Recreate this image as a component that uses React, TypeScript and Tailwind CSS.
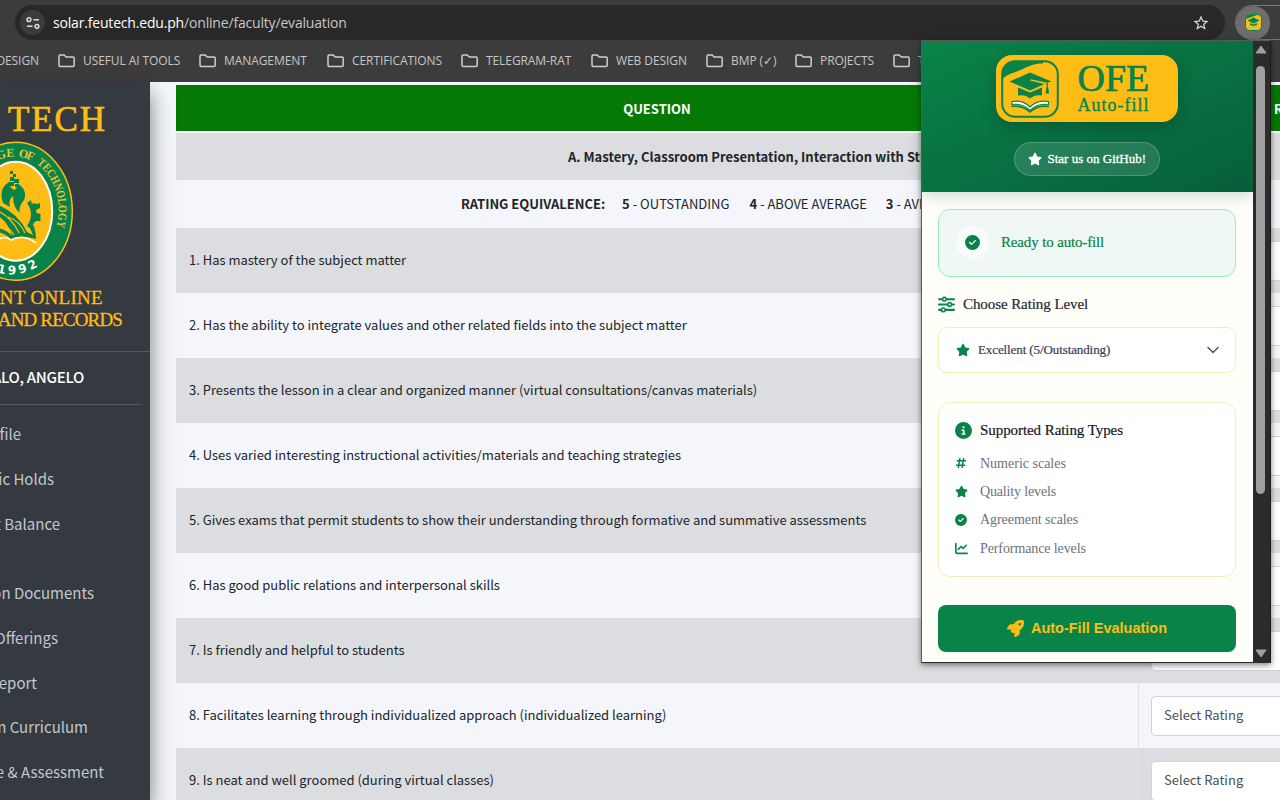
import { type ReactNode } from "react";
import { FaStar, FaCircleCheck, FaSliders, FaCircleInfo, FaHashtag, FaChartLine, FaRocket } from "react-icons/fa6";
import { MdStarBorder } from "react-icons/md";

const CJK = "font-['Noto_Sans_CJK_SC',sans-serif]";
const UI = "font-['Open_Sans',sans-serif]";
const SERIF = "font-['Liberation_Serif',serif]";

function T({ className = "", children }: { className?: string; children: ReactNode }) {
  return <span className={"inline-block shrink-0 whitespace-nowrap " + className}>{children}</span>;
}

function Folder() {
  return (
    <svg className="h-[14px] w-[18px] shrink-0" viewBox="0 0 18 14" fill="none" stroke="#cfcfcf" strokeWidth="1.5" strokeLinejoin="round">
      <path d="M1 2.2Q1 1 2.2 1H6.2L8.2 3H15Q16.2 3 16.2 4.2V11.3Q16.2 12.5 15 12.5H2.2Q1 12.5 1 11.3Z" />
    </svg>
  );
}

const bookmarks = [
  { name: "USEFUL AI TOOLS", width: "w-[141px]" },
  { name: "MANAGEMENT", width: "w-[128px]" },
  { name: "CERTIFICATIONS", width: "w-[134px]" },
  { name: "TELEGRAM-RAT", width: "w-[130px]" },
  { name: "WEB DESIGN", width: "w-[115px]" },
  { name: "BMP (✓)", width: "w-[89px]" },
  { name: "PROJECTS", width: "w-[98px]" },
];

function Cap() {
  return (
    <svg className="h-[58px] w-[58px] shrink-0" viewBox="0 0 58 58">
      <rect x="1.2" y="1.2" width="55.600" height="55.600" rx="13" fill="#fdbd14" stroke="#0a8349" strokeWidth="2" />
      <path d="M1.2 19V14Q1.2 1.2 14 1.2H42V3.500H38Q32 4 26 7Q18 11 9 14Q4 16 1.2 19Z" fill="#0a8349" />
      <path d="M29 12.5 8.5 21.5 29 30.5 43.500 24 29 20.500 29.500 19.300 46 22.800 50.500 21.500Z" fill="#0a8349" />
      <path d="M17 27.500 29 32.600 41 27.500V35.500Q34 34 29 38.500Q24 34 17 35.500Z" fill="#0a8349" />
      <path d="M46.200 23V31" stroke="#0a8349" strokeWidth="1.3" />
      <path d="M45.500 28h1.800l.9 5.500h-3.600z" fill="#0a8349" />
      <path d="M11 41.5Q22 39.5 29 47Q36 39.5 47.500 41.5V44.500Q36 43 29 50.500Q22 43 11 44.500Z" fill="#fff" stroke="#0a8349" strokeWidth="1.1" />
      <path d="M10.500 46.500Q21 44.500 29 52Q37 44.500 48 46.500" fill="none" stroke="#0a8349" strokeWidth="1.6" />
    </svg>
  );
}

function Seal() {
  return (
    <svg className="block h-[142px] w-[75px]" viewBox="0 140 75 142">
      <ellipse cx="15.700" cy="211.200" rx="56.600" ry="69" fill="#0a8349" stroke="#fdbd14" strokeWidth="1.500" />
      <ellipse cx="15.700" cy="211.200" rx="36.500" ry="49.500" fill="#fdbd14" stroke="#fff" strokeWidth="2" />
      <path d="M32 205 33 203 37 204 40 203V208L36 210 36.500 213 40.500 214V221H36L33 224 34 231 27 226Q35 214 27 203L31 200Z" fill="#0a8349" />
      <path d="M10 171h3v3h-3zM13 174h3v3h-3zM10 177h4v4h-4zM14 179h5v4h-5zM9 182h5v4H9zM15 184h3v3h-3z" fill="#0a8349" />
      <path d="M3 203Q-2 189 9 182Q9 187 14 190Q18 188 17 183Q28 190 24 200Q18 207 20 213Q13 208 13 196Q8 200 10 207Z" fill="#0a8349" />
      <path d="M-2 205Q18 213 27 232L33 235 30 228 34 226Q36 233 36 239Q20 234 11 239Q5 233 -2 232V228Q7 230 12 236Q8 222 -2 216Z" fill="#0a8349" />
      <path d="M-2 211Q12 218 19 233M8 217Q20 221 25 233M-1 222Q8 226 14 235" fill="none" stroke="#fdbd14" strokeWidth="1.200" />
      <path d="M-2 239Q6 236 11 240Q23 234 36 243" fill="none" stroke="#fff" strokeWidth="1.500" />
      <path id="sealTop" d="M-18 171Q0 155 15.700 157A43 54 0 0 1 58.700 211Q58.700 222 54 234" fill="none" />
      <path id="sealBottom" d="M-10 270Q16 281 42 264" fill="none" />
      <g fill="#e9c33a" fontFamily="Liberation Serif" fontWeight="700" fontSize="12">
        <text><textPath href="#sealTop" startOffset="19">GE</textPath></text>
        <text><textPath href="#sealTop" startOffset="40" textLength="15">OF</textPath></text>
        <text><textPath href="#sealTop" startOffset="60" textLength="70" lengthAdjust="spacingAndGlyphs">TECHNOLOGY</textPath></text>
      </g>
      <text fill="#fff" fontFamily="DejaVu Sans" fontWeight="700" fontSize="12"><textPath href="#sealBottom" startOffset="7" textLength="43">1992</textPath></text>
    </svg>
  );
}

const menu = [
  { t: "file", b: "w-[21px]", h: "h-[45px]" },
  { t: "ic Holds", b: "w-[54px]", h: "h-[45px]" },
  { t: "t Balance", b: "w-[60px]", h: "h-[69px]" },
  { t: "on Documents", b: "w-[94px]", h: "h-[45px]" },
  { t: "Offerings", b: "w-[58px]", h: "h-[45px]" },
  { t: "Report", b: "w-[37px]", h: "h-[44px]" },
  { t: "m Curriculum", b: "w-[88px]", h: "h-[45px]" },
  { t: "e & Assessment", b: "w-[104px]", h: "h-[45px]" },
];

const questions = [
  "1. Has mastery of the subject matter",
  "2. Has the ability to integrate values and other related fields into the subject matter",
  "3. Presents the lesson in a clear and organized manner (virtual consultations/canvas materials)",
  "4. Uses varied interesting instructional activities/materials and teaching strategies",
  "5. Gives exams that permit students to show their understanding through formative and summative assessments",
  "6. Has good public relations and interpersonal skills",
  "7. Is friendly and helpful to students",
  "8. Facilitates learning through individualized approach (individualized learning)",
  "9. Is neat and well groomed (during virtual classes)",
];

const types = [
  { t: "Numeric scales", icon: <FaHashtag className="size-[12px]" />, s: "" },
  { t: "Quality levels", icon: <FaStar className="size-[13px]" />, s: "tracking-[-0.15px]" },
  { t: "Agreement scales", icon: <FaCircleCheck className="size-[12px]" />, s: "tracking-[-0.06px]" },
  { t: "Performance levels", icon: <FaChartLine className="size-[13px]" />, s: "tracking-[-0.1px]" },
];

function Popup() {
  return (
    <div className="absolute left-[921px] top-[40px] flex h-[623px] w-[350px] border border-[#5b5b5b] border-r-[#1c1c1c] border-b-[#2c2c2c] bg-[#fffef9] shadow-[0_2px_6px_rgba(0,0,0,0.5)]">
      <div className={"flex w-[331px] shrink-0 flex-col " + SERIF}>
        <div className="flex h-[151px] shrink-0 flex-col items-center bg-linear-to-br from-[#0a8349] to-[#065f3a] pt-[14px] pr-[2px] shadow-[0_4px_14px_rgba(6,95,58,0.2)]">
          <div className="flex h-[67px] w-[182px] items-center rounded-[16px] bg-[#fdbd14] pl-[5px] shadow-[0_6px_16px_rgba(0,0,0,0.18)]">
            <Cap />
            <div className="ml-[19px] flex flex-col text-[#0a8349]">
              <T className="text-[38px] leading-[32px] [-webkit-text-stroke:0.7px]">OFE</T>
              <T className="text-[18px] leading-[22px] tracking-[1px] [-webkit-text-stroke:0.3px]">Auto-fill</T>
            </div>
          </div>
          <div className="mt-[20px] flex h-[34px] w-[146px] items-center gap-[6px] rounded-full border border-white/20 bg-white/12 pl-[13px] text-[13px] text-white">
            <FaStar className="size-[14px]" />
            <T className="[-webkit-text-stroke:0.3px]">Star us on GitHub!</T>
          </div>
        </div>
        <div className="flex flex-col pt-[17px] pr-[17px] pl-[16px]">
          <div className="flex h-[68px] items-center rounded-[12px] border border-[#93edc9] bg-[#f0f8f5] pb-[2px] pl-[17px]">
            <span className="flex size-[33px] items-center justify-center rounded-full bg-[#f9fcfb]"><FaCircleCheck className="size-[15px] text-[#0a8349]" /></span>
            <T className="ml-[12px] text-[15px] tracking-[-0.15px] text-[#0a8349] [-webkit-text-stroke:0.2px]">Ready to auto-fill</T>
          </div>
          <div className="mt-[15px] flex h-[24px] items-center gap-[8px] text-[15px] text-[#1f2937]">
            <FaSliders className="size-[17px] text-[#0a8349]" />
            <T className="tracking-[-0.08px] [-webkit-text-stroke:0.2px]">Choose Rating Level</T>
          </div>
          <div className="mt-[11px] flex h-[46px] items-center rounded-[9px] border border-[#f6edbc] bg-white pl-[17px] text-[13px] text-[#374151]">
            <FaStar className="size-[14px] text-[#0a8349]" />
            <T className="ml-[8px] tracking-[-0.1px] [-webkit-text-stroke:0.2px]">Excellent (5/Outstanding)</T>
            <svg className="mr-[16px] ml-auto h-[8px] w-[12px]" viewBox="0 0 12 8" fill="none" stroke="#4b5563" strokeWidth="1.500" strokeLinecap="round" strokeLinejoin="round"><path d="M1 1.500 6 6.500 11 1.500" /></svg>
          </div>
          <div className="mt-[29px] flex h-[175px] flex-col rounded-[12px] border border-[#f6edbc] bg-white pt-[15px] pl-[16px]">
            <div className="flex h-[24px] items-center gap-[8px] text-[15px] text-[#111827]">
              <FaCircleInfo className="size-[17px] text-[#0a8349]" />
              <T className="tracking-[-0.07px] [-webkit-text-stroke:0.2px]">Supported Rating Types</T>
            </div>
            <div className="mt-[7px] flex flex-col">
              {types.map((x) => (
                <div key={x.t} className="flex h-[28.400px] items-center text-[14px] text-[#6b7280]">
                  <span className="flex w-[25px] text-[#0a8349]">{x.icon}</span>
                  <T className={x.s}>{x.t}</T>
                </div>
              ))}
            </div>
          </div>
          <div className="mt-[28px] flex h-[47px] items-center justify-center gap-[7px] rounded-[8px] bg-[#0a8349] text-[14.500px] font-bold text-[#fdbd14] font-['Liberation_Sans',sans-serif]">
            <FaRocket className="size-[17px]" />
            <T>Auto-Fill Evaluation</T>
          </div>
        </div>
      </div>
      <div className="flex flex-1 flex-col items-center bg-[#2b2b2b] pt-[4px] pr-[2px] pb-[4px]">
        <svg className="h-[9px] w-[12px]" viewBox="0 0 12 9"><path d="M6 1 11 8H1Z" fill="#9f9f9f" stroke="#9f9f9f" strokeLinejoin="round" /></svg>
        <div className="mt-[12px] h-[428px] w-[9px] rounded-full bg-[#9f9f9f]" />
        <svg className="mt-auto h-[9px] w-[12px]" viewBox="0 0 12 9"><path d="M6 8 11 1H1Z" fill="#9f9f9f" stroke="#9f9f9f" strokeLinejoin="round" /></svg>
      </div>
    </div>
  );
}

export default function App() {
  return (
    <div className={"relative flex h-[800px] w-[1280px] flex-col overflow-hidden bg-[#f4f6f9] " + CJK}>
      <header className={"flex h-[82px] shrink-0 flex-col bg-[#3c3c3c] pt-[5px] " + UI}>
        <div className="flex h-[35px] items-center">
          <div className="ml-[15px] flex h-[35px] w-[1210px] shrink-0 items-center rounded-full bg-[#282828] pl-[5px]">
            <span className="flex size-[25px] items-center justify-center rounded-full bg-[#3c3c3c]">
              <svg className="h-[12px] w-[14px]" viewBox="0 0 14 12" fill="none" stroke="#dcdcdc" strokeWidth="1.500"><circle cx="3" cy="2.700" r="1.900" /><path d="M7.500 2.700H13M1 9.300H6.500" /><circle cx="11" cy="9.300" r="1.900" /></svg>
            </span>
            <T className="ml-[8px] text-[14px] tracking-[-0.18px] text-[#c7c7c7]"><span className="text-white">solar.feutech.edu.ph</span>/online/faculty/evaluation</T>
            <MdStarBorder className="mr-[15px] ml-auto size-[18px] text-[#dcdcdc]" />
          </div>
          <div className="ml-[10px] flex h-[35px] w-[60px] shrink-0 items-center rounded-l-full border border-[#777]">
            <span className="flex size-[34px] shrink-0 items-center justify-center rounded-full bg-[#6e6e6e]">
              <svg className="size-[17px]" viewBox="0 0 17 17"><rect x=".5" y=".5" width="16" height="16" rx="4" fill="#fdbd14" stroke="#0a8349" /><path d="M1 5V3Q1 1 4 1h8Z M8.500 3.500 14.500 6.500 8.500 9.500 2.500 6.500Z M5 9 8.500 10.500 12 9v2l-3.500 1L5 11Z" fill="#0a8349" /><path d="M3.500 12.500 8.500 14.500 13.500 12.500" stroke="#9fce8a" fill="none" /></svg>
            </span>
          </div>
        </div>
        <div className="flex h-[41px] items-center text-[12px] tracking-[-0.08px] text-[#c7c7c7]">
          <span className="flex w-[39px] shrink-0 justify-end"><T>DESIGN</T></span>
          <span className="w-[19px] shrink-0" />
          {bookmarks.map((b) => (
            <span key={b.name} className={"flex shrink-0 items-center gap-[7px] " + b.width}><Folder /><T>{b.name}</T></span>
          ))}
          <span className="flex shrink-0 items-center gap-[7px]"><Folder />T</span>
        </div>
      </header>
      <div className="flex min-h-0 flex-1">
        <aside className="z-10 flex w-[150px] shrink-0 flex-col bg-[#343a40] shadow-[0_10px_20px_rgba(0,0,0,0.5)]">
          <div className={"flex flex-col text-[#fdbd14] " + SERIF}>
            <div className="mt-[18px] flex h-[40px] w-[107px] items-center justify-end"><T className="text-[35px] tracking-[1.9px] [-webkit-text-stroke:0.7px]">TECH</T></div>
            <Seal />
            <div className="mt-[5px] flex h-[22px] w-[103px] items-center justify-end"><T className="text-[19px] tracking-[0.3px] [-webkit-text-stroke:0.3px]">NT ONLINE</T></div>
            <div className="flex h-[22px] w-[122px] items-center justify-end"><T className="text-[19px] tracking-[-0.85px] [-webkit-text-stroke:0.3px]">AND RECORDS</T></div>
          </div>
          <div className="mt-[20px] h-px shrink-0 bg-[#4f5962]" />
          <div className="flex h-[53px] w-[141px] shrink-0 items-center border-b border-[#4f5962] pb-px"><span className="flex w-[84px] justify-end"><T className="text-[15px] font-medium tracking-[-0.3px] text-white">ALO, ANGELO</T></span></div>
          <div className="mt-[7px] flex flex-col">
            {menu.map((x) => (
              <div key={x.t} className={"shrink-0 " + x.h}><span className={"flex h-[45px] items-center justify-end text-[15px] text-[#c2c7d0] " + x.b}><T>{x.t}</T></span></div>
            ))}
          </div>
        </aside>
        <main className="ml-[26px] flex w-[1104px] shrink-0 flex-col pt-[3px] text-[13px] text-[#212529]">
          <div className="flex h-[46px] shrink-0 items-center bg-[#047a04] pt-px font-bold text-white">
            <span className="flex w-[962px] shrink-0 justify-center"><T>QUESTION</T></span><T className="ml-[136px]">RATING</T>
          </div>
          <div className="h-[2px] shrink-0 bg-white" />
          <div className="flex h-[47px] shrink-0 items-center bg-[#dcdde0] pl-[392px] font-bold"><T>A. Mastery, Classroom Presentation, Interaction with Students</T></div>
          <div className="flex h-[48px] shrink-0 items-center bg-[#f4f6fb] pl-[285px]">
            <T className="font-bold tracking-[-0.03px]">RATING EQUIVALENCE:</T>
            <T className="ml-[17px]"><b>5</b> - OUTSTANDING</T>
            <T className="ml-[20px]"><b>4</b> - ABOVE AVERAGE</T>
            <T className="ml-[19px]"><b>3</b> - AVERAGE</T>
          </div>
          {questions.map((q, i) => (
            <div key={q} className={"flex h-[65px] shrink-0 " + (i % 2 ? "bg-[#f4f6fb]" : "bg-[#dcdde0]")}>
              <div className="flex w-[963px] shrink-0 items-center border-r border-[#dee2e6] pb-px pl-[13px]"><T className="tracking-[-0.01px]">{q}</T></div>
              <div className="ml-[12px] flex flex-1 items-center"><div className="flex h-[40px] w-[200px] shrink-0 items-center rounded-[4px] border border-[#ced4da] bg-white pb-px pl-[12px] text-[#495057]"><T>Select Rating</T></div></div>
            </div>
          ))}
        </main>
      </div>
      <Popup />
    </div>
  );
}
